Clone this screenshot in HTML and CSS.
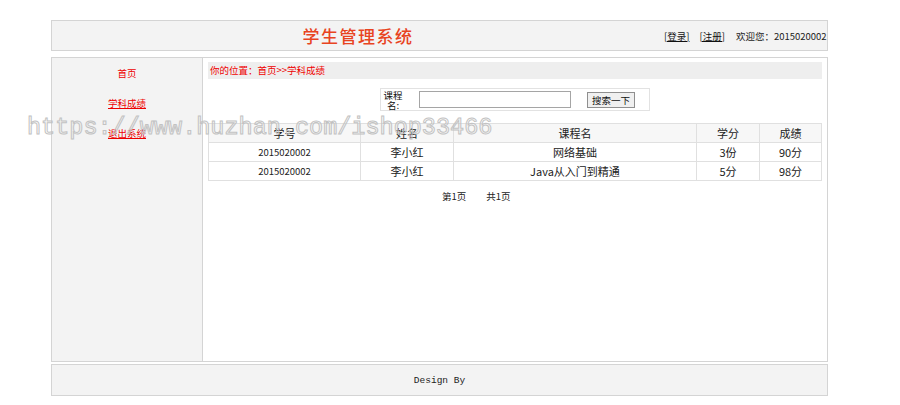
FILE: index.html
```html
<!DOCTYPE html>
<html lang="zh">
<head>
    <meta charset="UTF-8">
    <title>学生管理系统</title>
    <link rel="stylesheet" href="styles.css">
</head>
<body>
    <div class="wrap">
        <div class="top">
            <h1 class="title">学生管理系统</h1>
            <div class="user">
                <a href="#">[登录]</a>
                <a href="#">[注册]</a>
                <span>欢迎您：2015020002</span>
            </div>
        </div>
        <div class="main">
            <div class="side">
                <a href="#" class="home">首页</a>
                <a href="#">学科成绩</a>
                <a href="#">退出系统</a>
            </div>
            <div class="content">
                <div class="crumb">你的位置：首页&gt;&gt;学科成绩</div>
                <form class="search">
                    <label class="lbl">课程名:</label>
                    <input type="text" class="kw">
                    <button type="button" class="btn">搜索一下</button>
                </form>
                <table class="grid">
                    <tr>
                        <th class="c1">学号</th>
                        <th class="c2">姓名</th>
                        <th class="c3">课程名</th>
                        <th class="c4">学分</th>
                        <th class="c5">成绩</th>
                    </tr>
                    <tr>
                        <td class="num">2015020002</td>
                        <td>李小红</td>
                        <td>网络基础</td>
                        <td>3份</td>
                        <td>90分</td>
                    </tr>
                    <tr>
                        <td class="num">2015020002</td>
                        <td>李小红</td>
                        <td>Java从入门到精通</td>
                        <td>5分</td>
                        <td>98分</td>
                    </tr>
                </table>
                <div class="pager"><span>第1页</span><span>共1页</span></div>
            </div>
        </div>
        <div class="foot">Design By</div>
    </div>
    <div class="mark">https://www.huzhan.com/ishop33466</div>
</body>
</html>
```

FILE: styles.css
```css
* {
    margin: 0;
    padding: 0;
    box-sizing: border-box;
}

body {
    background: #fff;
    font-family: "Noto Sans CJK SC", "Liberation Sans", sans-serif;
    font-size: 10px;
    color: #222;
}

a {
    color: #e00;
}

.wrap {
    width: 777px;
    margin: 20px 0 0 51px;
}

.top {
    height: 31px;
    background: #f3f3f3;
    border: 1px solid #d4d4d4;
    display: flex;
    align-items: center;
    position: relative;
}

.title {
    width: 612px;
    text-align: center;
    font-family: "Noto Sans CJK SC", serif;
    font-size: 17px;
    font-weight: 500;
    color: #e8441f;
    letter-spacing: 1.5px;
}

.user {
    display: flex;
    gap: 10px;
    align-items: center;
    font-size: 9.5px;
}

.user a {
    color: #111;
}

.user span {
    margin-left: 1px;
}

.main {
    display: flex;
    height: 305px;
    margin-top: 6px;
    border: 1px solid #d4d4d4;
}

.side {
    width: 152px;
    background: #f3f3f3;
    border-right: 1px solid #d4d4d4;
    display: flex;
    flex-direction: column;
    align-items: center;
    padding-top: 7px;
    gap: 13px;
}

.side a {
    font-size: 9.5px;
    line-height: 17px;
}

.side a.home {
    text-decoration: none;
}

.content {
    flex: 1;
    padding: 4px 5px 0 5px;
}

.crumb {
    height: 17px;
    line-height: 17px;
    background: #eee;
    color: #e00;
    font-size: 9.5px;
    padding-left: 2px;
}

.search {
    width: 270px;
    height: 23px;
    margin: 9px 0 0 172px;
    border: 1px solid #e2e2e2;
    display: flex;
    align-items: center;
}

.lbl {
    width: 22px;
    font-size: 9.5px;
    line-height: 10px;
    text-align: center;
    margin-left: 1px;
    color: #111;
}

.kw {
    width: 152px;
    height: 17px;
    margin-left: 15px;
    border: 1px solid #a5a5a5;
}

.btn {
    width: 48px;
    height: 16px;
    margin-left: 16px;
    font-family: inherit;
    font-size: 9.5px;
    background: #f0f0f0;
    border: 1px solid #8f8f8f;
    color: #111;
}

.grid {
    width: 614px;
    margin-top: 12px;
    border-collapse: collapse;
}

.grid th,
.grid td {
    border: 1px solid #e0e0e0;
    height: 19px;
    text-align: center;
    font-size: 11px;
    font-weight: normal;
    color: #222;
    padding: 0;
}

.grid th {
    background: #f7f7f7;
}

.grid td.num {
    font-size: 9.5px;
}

.c1 { width: 152px; }
.c2 { width: 93px; }
.c3 { width: 243px; }
.c4 { width: 63px; }
.c5 { width: 62px; }

.pager {
    display: flex;
    gap: 20px;
    margin: 8px 0 0 234px;
    font-size: 9.5px;
}

.foot {
    height: 32px;
    margin-top: 2px;
    background: #f3f3f3;
    border: 1px solid #d4d4d4;
    display: flex;
    align-items: center;
    justify-content: center;
    font-family: "Liberation Mono", monospace;
    font-size: 9.5px;
}

.mark {
    position: absolute;
    left: 27px;
    top: 114px;
    font-family: "Liberation Mono", monospace;
    font-size: 23.5px;
    color: transparent;
    -webkit-text-stroke: 1px #c2c2c2;
    pointer-events: none;
}
```
